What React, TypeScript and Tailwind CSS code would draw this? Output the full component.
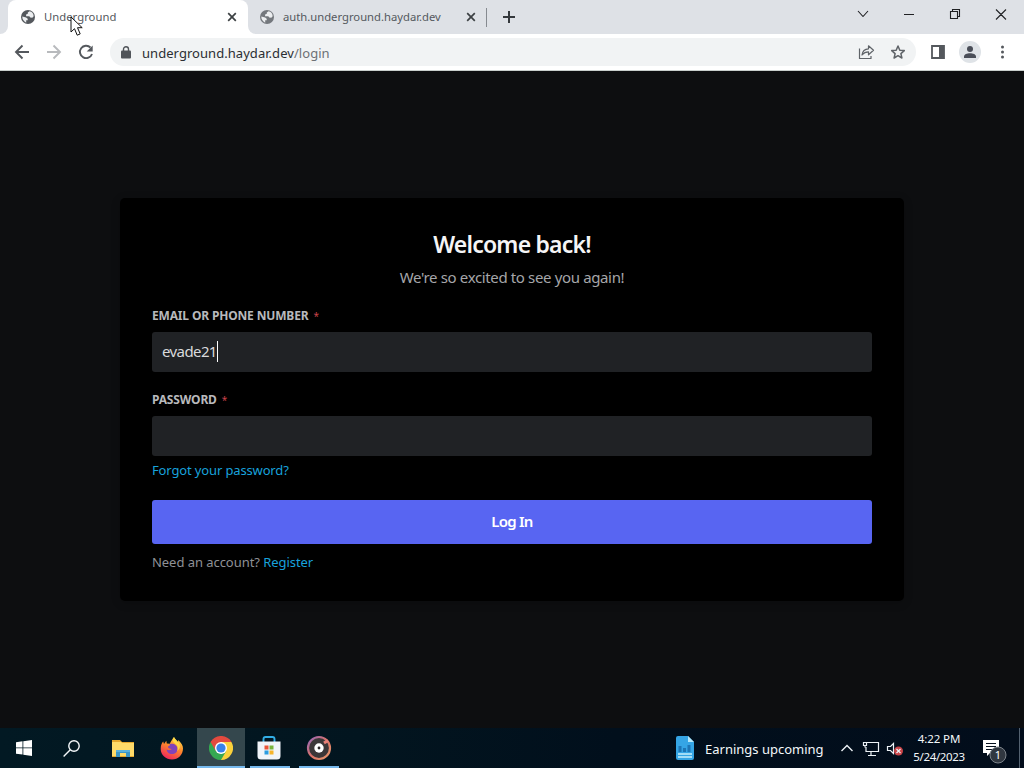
import type { ReactNode } from 'react';

function Globe({ color }: { color: string }) {
  return (
    <svg width="16" height="16" viewBox="0 0 16 16" className="shrink-0">
      <circle cx="8" cy="8" r="7" fill={color} />
      <path d="M9.5 2.300 7.800 3.500v1.300L6.100 5.400v1.800h3.200l1 1.300 2 .2 1.400-1.500C13.500 4.500 12 2.700 9.500 2.300ZM2.300 7.500l3.800 1 1.600 1.300v1.500H6.200v2.400C3.700 12.500 2.100 10.100 2.300 7.500Z" fill="#eceef0" />
    </svg>
  );
}

function Cross() {
  return (
    <svg width="10" height="10" viewBox="0 0 10 10" className="shrink-0" stroke="#3c4043" strokeWidth="1.7">
      <path d="m1.200 1.200 7.600 7.600M8.800 1.200 1.200 8.800" />
    </svg>
  );
}

function TabStrip() {
  return (
    <div className="flex h-[34px] bg-[#dee1e6]">
      <div className="flex w-2 shrink-0 bg-white">
        <div className="w-2 rounded-br-lg bg-[#dee1e6]" />
      </div>
      <div className="flex h-[34px] w-[240px] shrink-0 items-center rounded-t-lg bg-white pl-3">
        <Globe color="#54585d" />
        <span className="ml-2 w-[183px] text-[11.25px] leading-4 tracking-[0.04px] text-[#55595e]">Underground</span>
        <Cross />
      </div>
      <div className="flex w-2 shrink-0 bg-white">
        <div className="w-2 rounded-bl-lg bg-[#dee1e6]" />
      </div>
      <div className="flex w-[230px] shrink-0 items-center pl-[3px]">
        <Globe color="#74787d" />
        <span className="ml-2 w-[183px] whitespace-nowrap text-[11.25px] leading-4 text-[#55595e]">auth.underground.haydar.dev</span>
        <Cross />
      </div>
      <div className="mt-[8px] h-[19px] w-px bg-[#868a90]" />
      <svg width="12" height="12" viewBox="0 0 12 12" className="ml-4 mt-[11px]" stroke="#34383c" strokeWidth="2">
        <path d="M6 0v12M0 6h12" />
      </svg>
      <svg width="170" height="34" viewBox="854 0 170 34" className="ml-auto" fill="none" stroke="#202124" strokeWidth="1.1">
        <path d="m858 11 5 5.500 5-5.500M904 14.500h10M950.500 11.500h7v7h-7zM952.500 11.500v-2h7v7h-2M996 9.500l10 10M1006 9.500l-10 10" />
      </svg>
    </div>
  );
}

function Toolbar() {
  return (
    <div className="flex h-9 items-center bg-white">
      <svg width="110" height="36" viewBox="0 34 110 36" className="shrink-0" fill="none" strokeWidth="1.9">
        <path d="M29 52H16m6.500-6.500L16 52l6.500 6.500" stroke="#54585d" />
        <path d="M47 52h13m-6.500-6.500L60 52l-6.500 6.500" stroke="#b8babd" />
        <path d="M90.500 47.500A6.200 6.200 0 1 0 92 54" stroke="#54585d" />
        <path d="M92.700 45.500v6H86.700Z" fill="#54585d" />
      </svg>
      <div className="flex h-7 w-[806px] shrink-0 items-center rounded-full bg-[#f1f3f4] pl-[11px]">
        <svg width="10" height="13" viewBox="0 0 10 13">
          <rect y="4.500" width="10" height="8" rx="1" fill="#505459" />
          <path d="M2.500 5V3.200a2.500 2.500 0 0 1 5 0V5" fill="none" stroke="#505459" strokeWidth="1.400" />
        </svg>
        <span className="ml-[11px] pt-px text-[13px] leading-5 tracking-[0.05px] text-[#2b2e32]">
          underground.haydar.dev<span className="text-[#6d7175]">/login</span>
        </span>
        <svg width="50" height="18" viewBox="857 43 50 18" className="ml-auto mr-[9px]" fill="none" stroke="#5f6368" strokeWidth="1.2" strokeLinejoin="round">
          <path d="M859.500 48.500v10h11.500V56M862 55c.5-4 3-6 6.500-6.200v-3l5 4.500-5 4.500v-3c-3 0-4.700.9-6.500 3.200Z" />
          <path d="m898 46 1.800 4.200 4.500.4-3.400 3 1 4.400-3.900-2.300-3.900 2.300 1-4.400-3.400-3 4.500-.4Z" strokeWidth="1.500" />
        </svg>
      </div>
      <svg width="108" height="36" viewBox="916 34 108 36" className="shrink-0">
        <path d="M932 46h12v12h-12z" fill="none" stroke="#54585d" strokeWidth="1.800" />
        <path d="M939 46h5v12h-5z" fill="#54585d" />
        <circle cx="970" cy="52" r="11" fill="#dfe3e7" />
        <circle cx="970" cy="49" r="3" fill="#4a4e58" />
        <path d="M964 58v-1.500c0-4.500 12-4.500 12 0V58Z" fill="#4a4e58" />
        <g fill="#54585d"><circle cx="1002.500" cy="47" r="1.500" /><circle cx="1002.500" cy="52" r="1.500" /><circle cx="1002.500" cy="57" r="1.500" /></g>
      </svg>
    </div>
  );
}

function Label({ children }: { children: ReactNode }) {
  return (
    <label className="flex h-4 items-center whitespace-nowrap text-[12px] font-bold leading-4 tracking-[-0.16px] text-[#b8b9bc]">
      {children}<span className="ml-[5px] text-[10px] font-normal text-[#c9424a]">*</span>
    </label>
  );
}

function LoginCard() {
  return (
    <main className="mt-[127px] flex h-[403px] w-[784px] flex-col rounded-[5px] bg-black px-8 pt-[31px] font-['Noto_Sans',sans-serif] shadow-[0_2px_10px_rgba(0,0,0,0.2)]">
      <h1 className="text-center text-[23px] font-semibold leading-[30px] tracking-[-0.8px] text-[#f5f5f6]">Welcome back!</h1>
      <p className="mt-[6px] text-center text-[15px] leading-6 tracking-[-0.36px] text-[#a5a6a9]">We're so excited to see you again!</p>
      <div className="mt-[19px]"><Label>EMAIL OR PHONE NUMBER</Label></div>
      <div className="mt-2 flex h-10 items-center rounded-[3px] bg-[#202225] px-[10px] pb-[2px] text-[15px] tracking-[-0.6px] text-[#d9dadc]">
        evade21<span className="h-[21px] w-px bg-white" />
      </div>
      <div className="mt-5"><Label>PASSWORD</Label></div>
      <div className="mt-2 h-10 rounded-[3px] bg-[#202225]" />
      <a className="mt-[6px] self-start text-[13px] leading-4 tracking-[-0.14px] text-[#18a2dc]">Forgot your password?</a>
      <button className="mt-[22px] flex h-11 items-center justify-center rounded-[3px] bg-[#5865f2] pb-[2px] text-[15px] font-semibold tracking-[-0.75px] text-white">Log In</button>
      <p className="mt-[10px] text-[13px] leading-4 tracking-[-0.05px] text-[#8f9196]">Need an account? <a className="text-[#18a2dc]">Register</a></p>
    </main>
  );
}

function Firefox() {
  return (
    <svg width="24" height="24" viewBox="0 0 24 24">
      <defs><linearGradient id="fire" x1=".8" y1="0" x2=".3" y2="1"><stop stopColor="#ffe14c" /><stop offset=".45" stopColor="#ff8a2a" /><stop offset="1" stopColor="#ed235d" /></linearGradient></defs>
      <path d="M14 1c.5 2 3 3 4 5l.3-2c3 3 4.700 5.500 4.700 8.500C23 19 18 23.500 12 23.500S.7 19 .7 13c0-3.500 1-6 2.500-7.500L4 8l2.300-3.300.5 2.700 3 .3C11 5.500 12 3.500 14 1Z" fill="url(#fire)" />
      <path d="M9.500 8c4-1 8 1 8 5 0 3-2.500 5-5.500 5s-5.300-2-5.300-4.500c2 1 3.500.8 5.200-.5-2.500 0-4.200-1-3.900-2.500l2-1.300Z" fill="#8243b8" />
      <path d="M14 1c-2 3-1 5 1.500 7 2 1.500 3 4 1.500 7 4-2.500 3.500-6.500 1-9-1.500-2-3.500-3-4-5Z" fill="#ffe24a" opacity=".8" />
    </svg>
  );
}

function Chrome() {
  return (
    <svg width="24" height="24" viewBox="0 0 24 24">
      <path d="M12 12 1.600 6A12 12 0 0 1 22.400 6Z" fill="#e34a3f" />
      <path d="M12 12 1.600 6A12 12 0 0 0 12 24l5.200-9Z" fill="#36a852" />
      <path d="M12 12 12 24A12 12 0 0 0 22.400 6H12Z" fill="#fbd13b" />
      <path d="M12 6h10.400L20 3 12 0 1.600 6l5.200 9Z" fill="#e34a3f" />
      <path d="m6.800 15 5.200 3 5.200-3L12 24Z" fill="#36a852" />
      <circle cx="12" cy="12" r="6" fill="#fff" /><circle cx="12" cy="12" r="4.600" fill="#3982ea" />
    </svg>
  );
}

function TaskButton({ children, line = false, active = false }: { children: ReactNode; line?: boolean; active?: boolean }) {
  return (
    <div className={`flex h-10 shrink-0 flex-col items-center ${active ? 'ml-px w-12 bg-[#34474d]' : 'w-[49px]'}`}>
      <div className="flex h-[38px] items-center justify-center pt-[2px]">{children}</div>
      {line && <div className={active ? 'h-[2px] w-full bg-[#76b9ed]' : 'h-[2px] w-10 bg-[#76b9ed]'} />}
    </div>
  );
}

function Taskbar() {
  return (
    <footer className="flex h-10 bg-[linear-gradient(90deg,#021923_0%,#02151f_35%,#010f1c_60%,#020d1b_100%)] text-[#f3f7fa]">
      <div className="flex h-10 w-12 shrink-0 items-center justify-center">
        <svg width="16" height="16" viewBox="0 0 16 16" fill="#fff"><path d="M0 2.200 6.500 1.300V7.500H0ZM7.300 1.200 16 0v7.500H7.300ZM0 8.300h6.500v6.300L0 13.700ZM7.300 8.300H16V16l-8.700-1.200Z" /></svg>
      </div>
      <div className="flex h-10 w-12 shrink-0 items-center justify-center pr-px">
        <svg width="17" height="17" viewBox="0 0 17 17" fill="none" stroke="#f5f8fa" strokeWidth="1.400"><circle cx="11" cy="6" r="5.200" /><path d="m7.300 9.700-6.700 6.800" /></svg>
      </div>
      <div className="flex w-[250px] shrink-0 pl-[2px]">
        <TaskButton>
          <svg width="22" height="19" viewBox="0 0 22 19">
            <path d="M0 1h8l2 2h12v15H0Z" fill="#e6a82e" /><path d="M0 3h9l1.500 1H22v13H0Z" fill="#ffdb69" />
            <path d="M4 18v-7h14v7h-4v-4H8v4Z" fill="#3c96c6" /><path d="M4 11h14v2H4Z" fill="#5ab2dd" />
          </svg>
        </TaskButton>
        <TaskButton><Firefox /></TaskButton>
        <TaskButton line active><Chrome /></TaskButton>
        <TaskButton line>
          <svg width="25" height="24" viewBox="0 0 25 24">
            <path d="M6.500 6V3q0-2 2-2h7q2 0 2 2v3" fill="none" stroke="#32aee6" strokeWidth="1.900" />
            <path d="M.5 5.500h23V20q0 3.500-3.500 3.500H4Q.5 23.500.5 20Z" fill="#f0f4f9" />
            <path d="M7.500 9.500h4v4h-4z" fill="#e95538" /><path d="M12.500 9.500h4v4h-4z" fill="#78b43b" /><path d="M7.500 14.500h4v4h-4z" fill="#2b9ce0" /><path d="M12.500 14.500h4v4h-4z" fill="#f6b52b" />
          </svg>
        </TaskButton>
        <TaskButton line>
          <svg width="26" height="26" viewBox="0 0 26 26">
            <defs><linearGradient id="ring" x1="0" y1="0" x2="1" y2="1"><stop stopColor="#9269bd" /><stop offset=".5" stopColor="#dc7167" /><stop offset="1" stopColor="#e49a6b" /></linearGradient></defs>
            <circle cx="13" cy="13" r="11" fill="#3b3738" stroke="url(#ring)" strokeWidth="2.200" />
            <path d="m18 8 4-2.500" stroke="#e78078" strokeWidth="3" /><circle cx="13" cy="13" r="4.700" fill="#fff" /><circle cx="13" cy="13" r="1.400" fill="#292627" />
          </svg>
        </TaskButton>
      </div>
      <div className="ml-auto flex items-center">
        <svg width="18" height="24" viewBox="0 0 18 24">
          <path d="M2 0h10l6 6v16q0 2-2 2H2q-2 0-2-2V2q0-2 2-2Z" fill="#35a5e5" /><path d="M12 0v6h6Z" fill="#b6e8fa" />
          <path d="M2.500 10h3v6h-3zM7 12h3v4H7zM11.500 9h3v7h-3z" fill="#1d75b5" /><path d="M2 18h14M2 21h14" stroke="#c8effc" strokeWidth="1.500" />
        </svg>
        <span className="ml-[11px] w-[135px] whitespace-nowrap pt-[2px] text-[13px] leading-5">Earnings upcoming</span>
        <svg width="64" height="40" viewBox="840 728 64 40" fill="none" stroke="#edf2f6" strokeWidth="1.200">
          <path d="m841.500 751 5.500-5.500 5.500 5.500" strokeWidth="1.400" />
          <path d="M867 742.500h11.500v9H866v-4.500M871 752v3M868 755.500h8M863.500 742.500h3v3h-3zM865 745.500v2" />
          <path d="M887.500 746.500h3l3-3v10l-3-3h-3z" />
          <circle cx="898.500" cy="751" r="4.500" fill="#c94448" stroke="none" /><path d="m896.500 749 4 4m0-4-4 4" />
        </svg>
        <div className="w-[70px] pb-px text-center text-[11.500px] leading-[18px] tracking-[-0.35px]"><div className="tracking-[-0.1px]">4:22 PM</div><div>5/24/2023</div></div>
        <svg width="50" height="40" viewBox="974 728 50 40">
          <path d="M983 740h16v13h-9l-3 3v-3h-4Z" fill="#fff" /><path d="M986 743.500h10M986 746.500h10M986 749.500h7" stroke="#06111e" />
          <circle cx="998" cy="755" r="8" fill="#303740" stroke="#7c838a" /><text x="998" y="759" fontSize="11" textAnchor="middle" fill="#fff">1</text>
          <path d="M1019.500 728v40" stroke="#536170" />
        </svg>
      </div>
    </footer>
  );
}

export default function App() {
  return (
    <div className="relative flex h-[768px] w-[1024px] flex-col overflow-hidden bg-[#0d0e10] font-['Noto_Sans',sans-serif]">
      <TabStrip />
      <Toolbar />
      <div className="h-px shrink-0 bg-[#c8cecc]" />
      <section className="flex flex-1 justify-center"><LoginCard /></section>
      <Taskbar />
      <svg width="13" height="21" viewBox="0 0 13 21" className="absolute left-[70px] top-[16px]">
        <path d="M1 1v15l3.500-3.300 2.700 6.500 3-1.300-2.700-6.200h4.700Z" fill="#fff" stroke="#111" />
      </svg>
    </div>
  );
}
